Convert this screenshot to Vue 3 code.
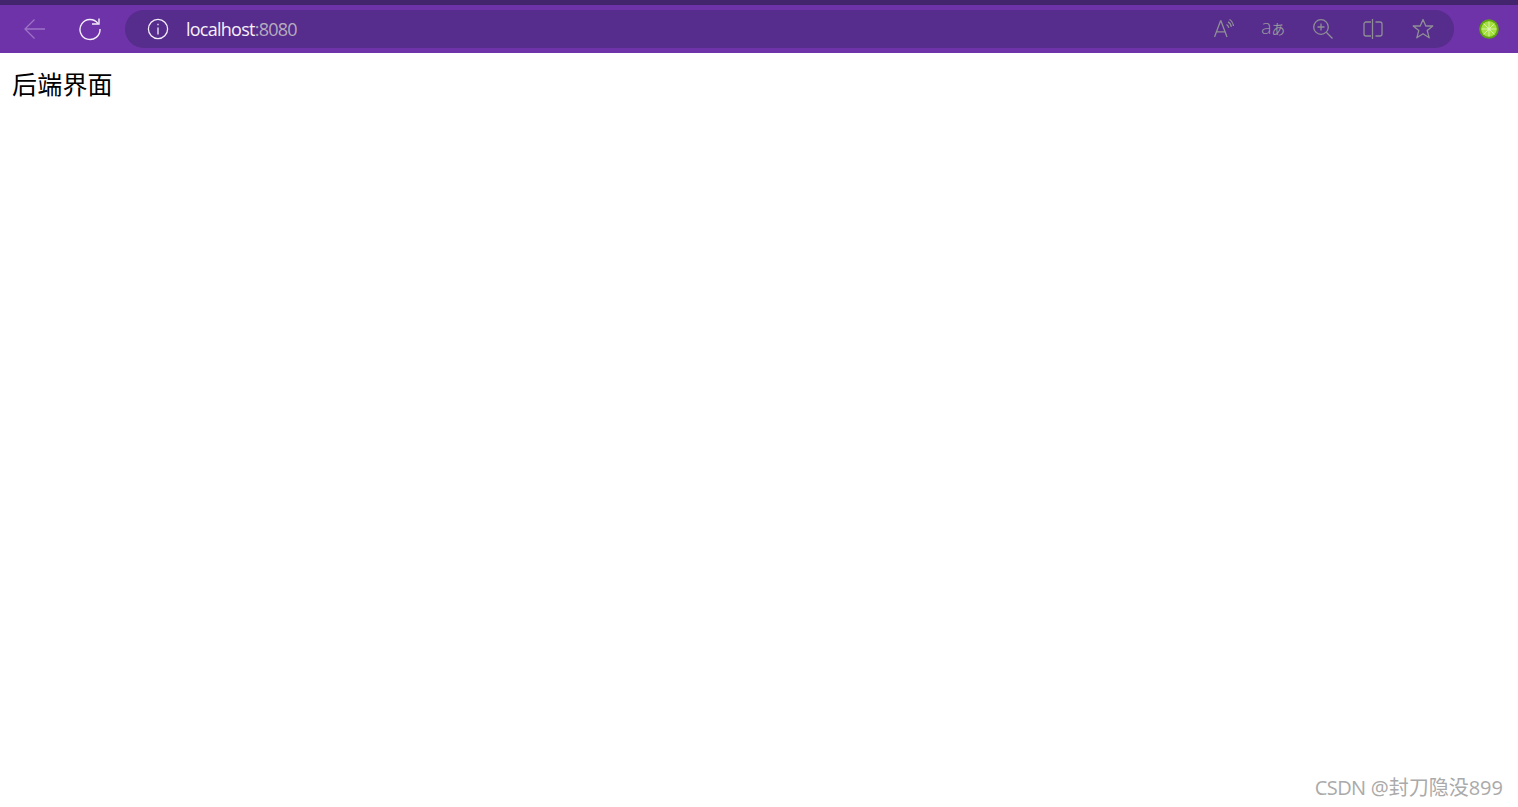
<script setup>
</script>

<template>
  <div class="page">
    <header class="chrome">
      <div class="tabline"></div>
      <div class="toolbar">
        <button class="nav back" aria-label="back">
          <svg width="24" height="24" viewBox="0 0 24 24" fill="none" stroke="#9d73c6" stroke-width="1.3"><path d="M2 12H22M11.500 2.500L2 12l9.500 9.500"/></svg>
        </button>
        <button class="nav reload" aria-label="reload">
          <svg width="24" height="24" viewBox="0 0 24 24" fill="none" stroke="#f4eefa" stroke-width="1.4"><path d="M20 6.500A10 10 0 1 0 22 12"/><path d="M14 7H21V1.500"/></svg>
        </button>
        <div class="omnibox">
          <svg class="info" width="22" height="22" viewBox="0 0 22 22" fill="none" stroke="#f4eefa" stroke-width="1.3"><circle cx="11" cy="11" r="9.600"/><path d="M11 9.500V16.500"/><path d="M11 5.800V7.300"/></svg>
          <div class="url"><span class="host">localhost</span><span class="port">:8080</span></div>
          <div class="actions">
            <div class="slot read">
              <svg width="20" height="20" viewBox="0 0 20 20" fill="none" stroke="#8f8f95" stroke-width="1.3"><path d="M0.500 18L6.500 2H7L13 18M2.500 12.800H11"/><path d="M12.500 5.500c1.300.7 2 1.800 2.300 3.300M14 2.800c2 1 3 2.500 3.300 5M15.500 .5c2.300 1.300 3.600 3.300 4 6.500"/></svg>
            </div>
            <div class="slot translate"><span class="tr-a">a</span><span class="tr-j">あ</span></div>
            <div class="slot">
              <svg width="22" height="22" viewBox="0 0 22 22" fill="none" stroke="#8f8f95" stroke-width="1.3"><circle cx="9" cy="9" r="7.300"/><path d="M14.300 14.300L20.500 20.500M9 5.500V12.500M5.500 9H12.500"/></svg>
            </div>
            <div class="slot">
              <svg width="22" height="22" viewBox="0 0 22 22" fill="none" stroke="#8f8f95" stroke-width="1.3"><path d="M9 4H4a2 2 0 0 0-2 2V16a2 2 0 0 0 2 2H9M13.500 4H18a2 2 0 0 1 2 2V16a2 2 0 0 1-2 2H13.500M10.500 1V21"/></svg>
            </div>
            <div class="slot">
              <svg width="22" height="22" viewBox="0 0 22 22" fill="none" stroke="#8f8f95" stroke-width="1.3" stroke-linejoin="round"><path d="M11 1.500L13.800 8H20.800L15.200 12.500L17.200 19.800L11 15.700L4.800 19.800L6.800 12.500L1.200 8H8.200Z"/></svg>
            </div>
          </div>
        </div>
        <svg class="ext" width="20" height="20" viewBox="0 0 20 20">
          <circle cx="10" cy="10" r="9.800" fill="#5fa510"/>
          <circle cx="10" cy="10" r="7.800" fill="#a5e03f"/>
          <path d="M10 2.500V17.500M2.500 10H17.500M4.700 4.700L15.300 15.300M15.300 4.700L4.700 15.300" stroke="#dcf5b4" stroke-width="0.900"/>
          <circle cx="10" cy="10" r="1.500" fill="#dcf5b4"/>
        </svg>
      </div>
    </header>
    <main class="content">
      <p class="title">后端界面</p>
    </main>
    <div class="watermark"><span class="wm-latin">CSDN</span> @封刀隐没899</div>
  </div>
</template>

<style>
html, body { margin: 0; background: #fff; }
</style>

<style scoped>
.page {
  position: relative;
  height: 807px;
  overflow: hidden;
  background: #fff;
  font-family: "Noto Sans CJK SC", "Liberation Sans", sans-serif;
}
.tabline { height: 5px; background: #43256e; }
.toolbar {
  height: 48px;
  background: #6e33a8;
  box-sizing: border-box;
  padding: 5px 19px 5px 11px;
  display: flex;
  align-items: center;
}
.nav {
  width: 48px;
  height: 38px;
  padding: 0;
  border: 0;
  background: none;
  display: flex;
  align-items: center;
  justify-content: center;
}
.reload { margin-left: 7px; margin-right: 7px; }
.omnibox {
  flex: 1;
  height: 38px;
  margin-left: 4px;
  border-radius: 19px;
  background: #562c8c;
  display: flex;
  align-items: center;
  padding-left: 22px;
  padding-right: 6px;
}
.url {
  margin-left: 17px;
  font-family: "Open Sans", "Liberation Sans", sans-serif;
  font-size: 18px;
  letter-spacing: -0.75px;
  flex: 1;
}
.host { color: #f6f1fa; }
.port { color: #b5adbd; }
.actions { display: flex; align-items: center; }
.slot {
  width: 50px;
  height: 24px;
  display: flex;
  align-items: center;
  justify-content: center;
}
.read svg { margin-left: 1px; }
.translate { color: #96969c; }
.tr-a {
  font-family: "Open Sans", sans-serif;
  font-weight: 300;
  font-size: 20px;
  line-height: 24px;
  position: relative;
  top: -2px;
}
.tr-j {
  font-family: "Noto Sans CJK JP", sans-serif;
  font-size: 13.5px;
  line-height: 24px;
  position: relative;
  top: -1px;
}
.ext { margin-left: 25px; }
.content { padding: 15px 12px; }
.title {
  margin: 0;
  font-size: 25px;
  letter-spacing: 0.2px;
  line-height: 30px;
  color: #000;
}
.watermark {
  position: absolute;
  right: 15px;
  bottom: 6px;
  font-family: "Open Sans", "Noto Sans CJK SC", sans-serif;
  font-size: 20px;
  line-height: 26px;
  color: #aaaaaa;
  white-space: nowrap;
}
.wm-latin { letter-spacing: -0.6px; }
</style>
